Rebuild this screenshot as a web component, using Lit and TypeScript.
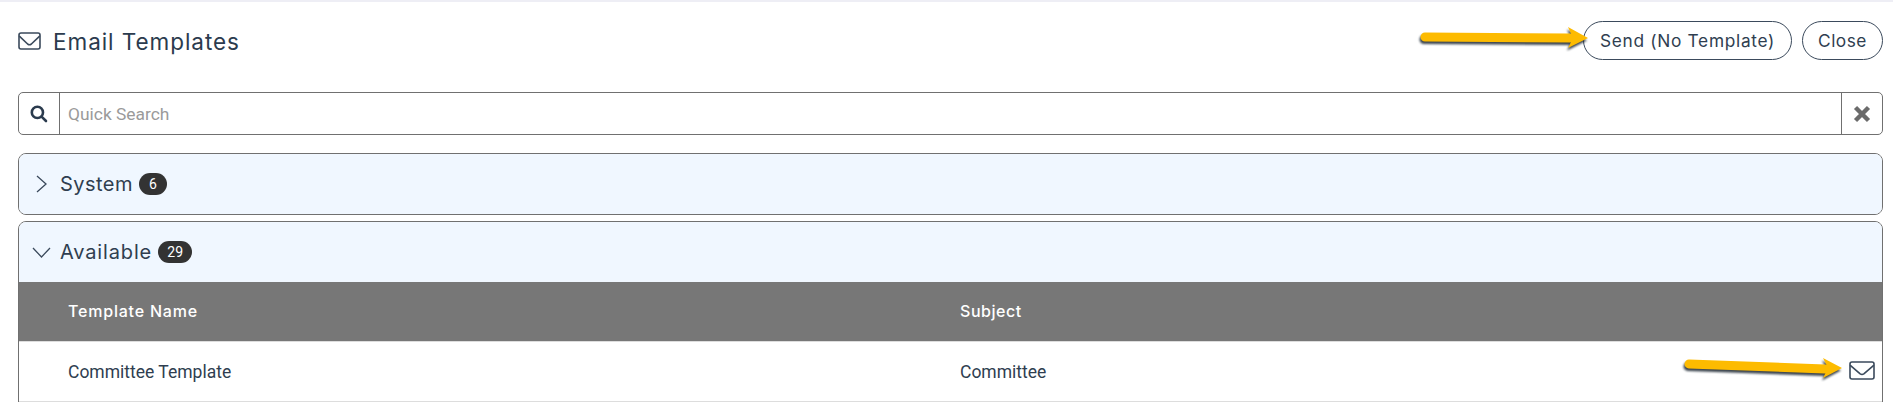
import { LitElement, html, css, svg } from "lit";
import { customElement } from "lit/decorators.js";

const envelope = (w: number, h: number, sw: number) => html`<svg class="env" width=${w} height=${h} viewBox="0 0 ${w} ${h}" fill="none" stroke="#3b4a5c" stroke-width=${sw} stroke-linejoin="round" stroke-linecap="round"><rect x=${sw / 2 + 0.2} y=${sw / 2 + 0.2} width=${w - sw - 0.4} height=${h - sw - 0.4} rx="2"/><path d="M${sw} ${h * 0.24} L${w * 0.43} ${h * 0.68} Q${w / 2} ${h * 0.74} ${w * 0.57} ${h * 0.68} L${w - sw} ${h * 0.24}"/></svg>`;

const arrow = (w: number, h: number, d1: string, d2: string) => svg`<svg width=${w} height=${h} viewBox="0 0 ${w} ${h}" fill="none"><g transform="translate(-1 2.5)" opacity=".85" style="filter:blur(1px)"><path d=${d1} stroke="#1a2530" stroke-width="9" stroke-linecap="round"/><path d=${d2} fill="#1a2530"/></g><path d=${d1} stroke="#fdbb00" stroke-width="9" stroke-linecap="round"/><path d=${d2} fill="#fdbb00"/></svg>`;

@customElement("app-root")
export class AppRoot extends LitElement {
  static styles = css`
    :host { display: block; position: relative; height: 402px; overflow: hidden; background: #fff; color: #2f3e50; font-family: "Inter", "Liberation Sans", sans-serif; }
    .strip { height: 2px; background: #eeeef5; }
    .page { padding: 0 10px 0 18px; display: flex; flex-direction: column; }
    .top { height: 90px; display: flex; align-items: flex-start; justify-content: space-between; }
    .title { display: flex; align-items: center; gap: 12px; height: 40px; margin-top: 19px; font-size: 22.5px; letter-spacing: .95px; color: #2b3b4e; }
    .btns { display: flex; gap: 10px; margin-top: 19px; }
    .btn { height: 39px; box-sizing: border-box; border: 1px solid #3b4a5c; border-radius: 20px; padding-bottom: 1px; display: flex; align-items: center; justify-content: center; font-size: 17.3px; letter-spacing: .7px; background: #fff; color: #2f3e50; }
    .btn.send { width: 209px; }
    .btn.close { width: 81px; letter-spacing: .5px; }
    .search { height: 43px; box-sizing: border-box; border: 1px solid #707070; border-radius: 5px; display: flex; align-items: stretch; margin-bottom: 18px; }
    .addon { width: 40px; display: flex; align-items: center; justify-content: center; }
    .addon.l { border-right: 1px solid #707070; }
    .addon.r { border-left: 1px solid #707070; }
    .ph { flex: 1; display: flex; align-items: center; padding-left: 8px; font-family: "Roboto", sans-serif; font-size: 17.4px; color: #9a9a9a; }
    .panel { border: 1px solid #707070; border-radius: 8px; overflow: hidden; }
    .panel.first { height: 62px; box-sizing: border-box; margin-bottom: 6px; }
    .panel.second { height: 190px; box-sizing: border-box; }
    .head { height: 60px; background: #f0f7ff; display: flex; align-items: center; font-size: 20px; letter-spacing: .45px; color: #2f3e50; }
    .chev { width: 41px; box-sizing: border-box; padding-left: 3px; display: flex; justify-content: center; }
    .label.wide { letter-spacing: .85px; }
    .badge { margin-left: 6px; height: 22px; min-width: 28px; padding: 0 3px; box-sizing: border-box; border-radius: 11px; background: #333; color: #fff; font-size: 14px; letter-spacing: 0; display: flex; align-items: center; justify-content: center; font-family: "Roboto", sans-serif; }
    .badge.wide { width: 34px; }
    .grid { display: grid; grid-template-columns: 892px 1fr; padding-left: 49px; align-items: center; box-sizing: border-box; height: 60px; border-bottom: 1px solid #ddd; }
    .thead { background: #777; color: #fff; font-size: 16px; font-weight: 500; letter-spacing: .8px; padding-bottom: 2px; }
    .thead .subject { letter-spacing: .55px; }
    .row { font-family: "Roboto", sans-serif; font-size: 17.5px; color: #2f3e50; }
    .arrow { position: absolute; display: block; }
    .a1 { left: 1416px; top: 24px; }
    .a2 { left: 1680px; top: 352px; }
    .rowenv { left: 1849px; top: 361px; }
  `;

  render() {
    return html`
      <div class="strip"></div>
      <div class="page">
        <div class="top">
          <div class="title">${envelope(23, 18, 1.6)}<span>Email Templates</span></div>
          <div class="btns">
            <div class="btn send">Send (No Template)</div>
            <div class="btn close">Close</div>
          </div>
        </div>
        <div class="search">
          <div class="addon l">
            <svg width="18" height="18" viewBox="0 0 18 18" fill="none" stroke="#2b3b4e" stroke-width="2.6" stroke-linecap="round"><circle cx="7.4" cy="7.4" r="5.6"/><path d="M11.8 11.8 L16 16"/></svg>
          </div>
          <div class="ph">Quick Search</div>
          <div class="addon r">
            <svg width="18" height="18" viewBox="0 0 18 18" fill="none" stroke="#6b6b6b" stroke-width="4.4"><path d="M2.5 2.5 L15.5 15.5 M15.5 2.5 L2.5 15.5"/></svg>
          </div>
        </div>
        <div class="panel first">
          <div class="head">
            <div class="chev"><svg width="11" height="18" viewBox="0 0 11 18" fill="none" stroke="#3b4a5c" stroke-width="1.3"><path d="M1 1 L10 9 L1 17"/></svg></div>
            <span class="label">System</span><span class="badge">6</span>
          </div>
        </div>
        <div class="panel second">
          <div class="head">
            <div class="chev"><svg width="19" height="11" viewBox="0 0 19 11" fill="none" stroke="#3b4a5c" stroke-width="1.3"><path d="M1 1 L9.5 10 L18 1"/></svg></div>
            <span class="label wide">Available</span><span class="badge wide">29</span>
          </div>
          <div class="grid thead"><span>Template Name</span><span class="subject">Subject</span></div>
          <div class="grid row"><span>Committee Template</span><span>Committee</span></div>
        </div>
      </div>
      <div class="arrow a1">${arrow(176, 32, "M 9 13 L 154 14", "M 152 3 L 172 14 L 152 24 L 157 14 Z")}</div>
      <div class="arrow a2">${arrow(168, 32, "M 9 12 L 145 17", "M 143 6 L 162 16 L 143 26 L 148 16 Z")}</div>
      <div class="arrow rowenv">${envelope(26, 19, 1.6)}</div>
    `;
  }
}
